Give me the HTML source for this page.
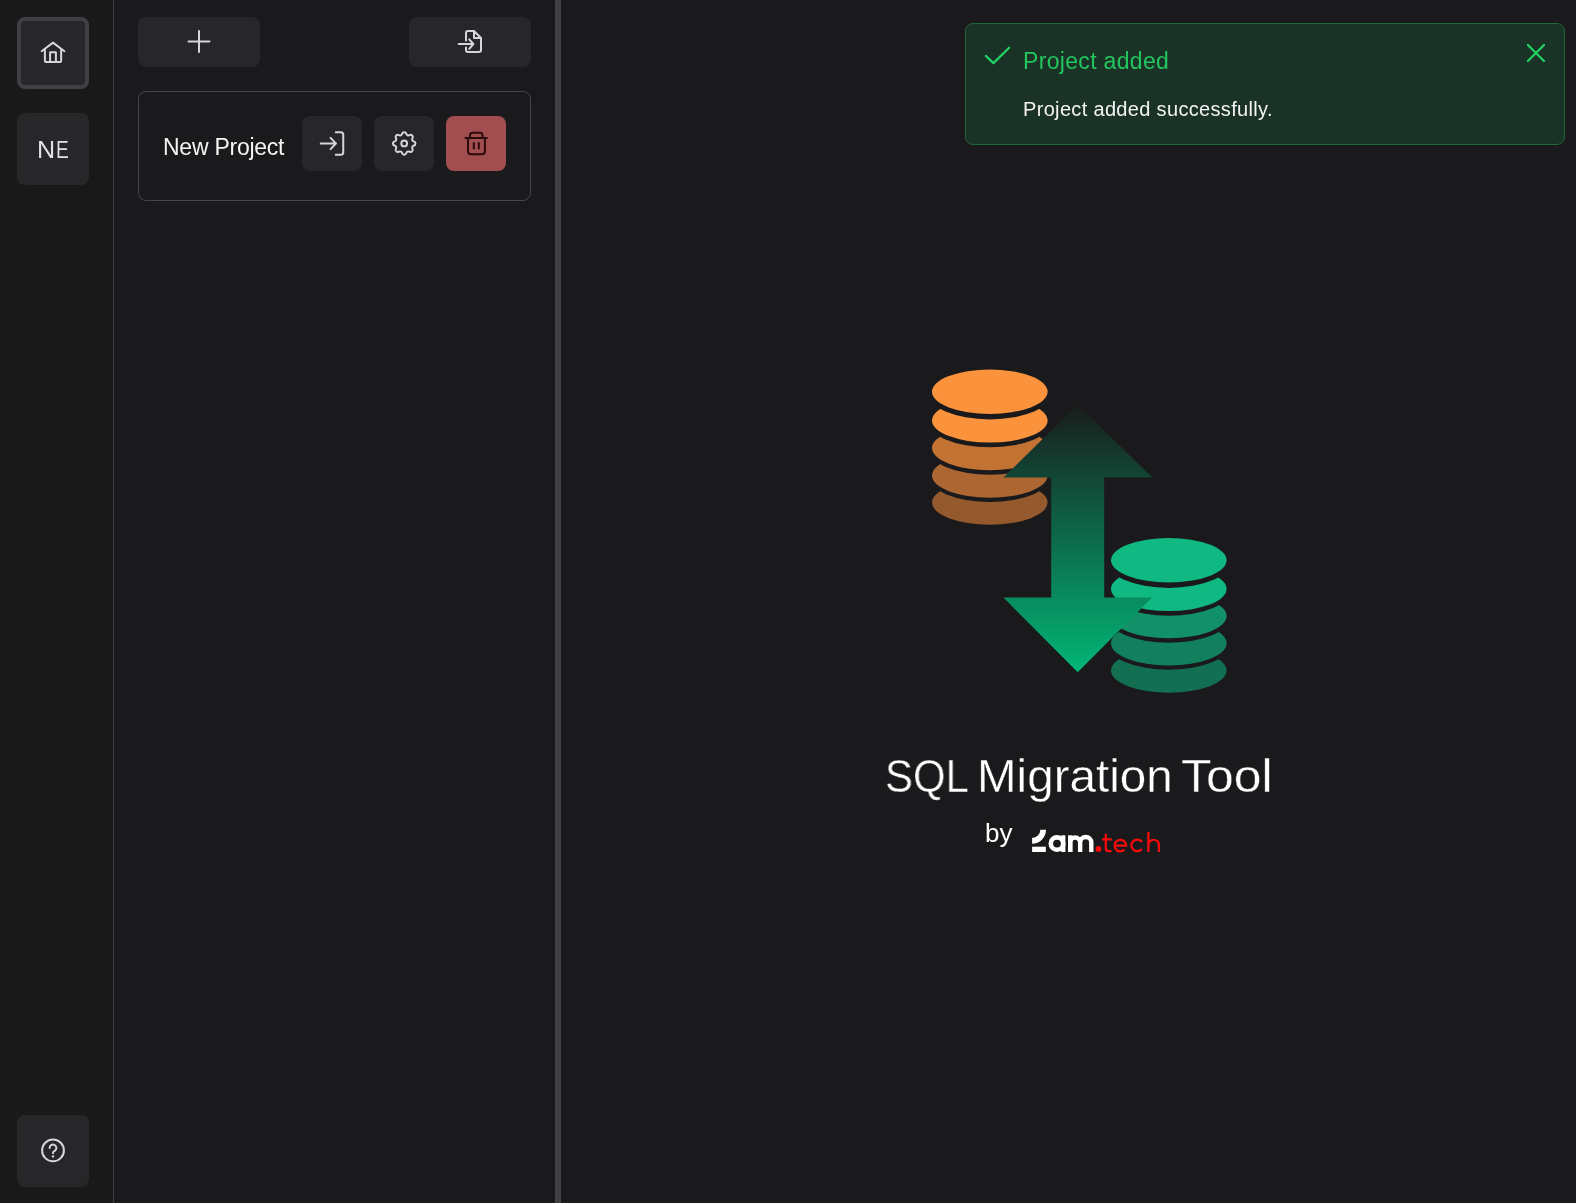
<!DOCTYPE html>
<html>
<head>
<meta charset="utf-8">
<style>
html,body{margin:0;padding:0;width:1576px;height:1203px;overflow:hidden;background:#1a1a1d;font-family:"Liberation Sans",sans-serif;}
.abs{position:absolute;}
#side{left:0;top:0;width:113px;height:1203px;background:#191919;}
#sideline{left:113px;top:0;width:1px;height:1203px;background:#3f3f46;}
#panel{left:114px;top:0;width:441px;height:1203px;background:#1a1a1d;}
#divider{left:555px;top:0;width:6px;height:1203px;background:#3f3f46;}
.btn{position:absolute;background:#27272a;border-radius:8px;}
#home{left:17px;top:17px;width:64px;height:64px;border:4px solid #3f3f46;border-radius:8px;}
.txt{position:absolute;white-space:nowrap;line-height:1;will-change:transform;}
#card{left:138px;top:91px;width:391px;height:108px;border:1px solid #45454c;border-radius:8px;}
#toast{left:965px;top:23px;width:598px;height:120px;border:1px solid #21663a;background:#1b3226;border-radius:8px;}
svg.full{position:absolute;left:0;top:0;width:1576px;height:1203px;}
</style>
</head>
<body>
<div class="abs" id="side"></div>
<div class="abs" id="sideline"></div>
<div class="abs" id="panel"></div>
<div class="abs" id="divider"></div>

<div class="btn" id="home"></div>
<div class="btn" style="left:17px;top:113px;width:72px;height:72px;"></div>
<div class="btn" style="left:17px;top:1115px;width:72px;height:72px;"></div>

<div class="btn" style="left:138px;top:17px;width:122px;height:50px;"></div>
<div class="btn" style="left:409px;top:17px;width:122px;height:50px;"></div>

<div class="abs" id="card"></div>
<div class="btn" style="left:302px;top:116px;width:60px;height:55px;"></div>
<div class="btn" style="left:374px;top:116px;width:60px;height:55px;"></div>
<div class="btn" style="left:446px;top:116px;width:60px;height:55px;background:#a24d4f;"></div>

<div class="abs" id="toast"></div>

<div class="txt" style="left:37px;top:138px;font-size:24px;color:#e2e2e5;transform-origin:0 0;transform:scaleX(1.045);">N</div>
<div class="txt" style="left:56px;top:138px;font-size:24px;color:#e2e2e5;transform-origin:0 0;transform:scaleX(0.80);">E</div>
<div class="txt" style="left:163px;top:135.5px;font-size:23px;letter-spacing:-0.25px;color:#f4f4f5;">New Project</div>
<div class="txt" style="left:1023px;top:50px;font-size:23px;letter-spacing:0.33px;color:#22c55e;">Project added</div>
<div class="txt" style="left:1023px;top:99px;font-size:20px;letter-spacing:0.33px;color:#f4f4f5;">Project added successfully.</div>
<div class="txt" id="w1" style="-webkit-text-stroke:0.4px #1a1a1d;left:885px;top:753px;font-size:46px;color:#ffffff;transform-origin:0 0;transform:scaleX(0.91);">SQL</div>
<div class="txt" id="w2" style="-webkit-text-stroke:0.4px #1a1a1d;left:976.5px;top:753px;font-size:46px;color:#ffffff;transform-origin:0 0;transform:scaleX(1.034);">Migration</div>
<div class="txt" id="w3" style="-webkit-text-stroke:0.4px #1a1a1d;left:1181px;top:753px;font-size:46px;color:#ffffff;transform-origin:0 0;transform:scaleX(1.085);">Tool</div>
<div class="txt" style="left:985px;top:820px;font-size:26px;color:#ffffff;">by</div>

<svg class="full" viewBox="0 0 1576 1203">
<defs>
<linearGradient id="ag" gradientUnits="userSpaceOnUse" x1="0" y1="404.6" x2="0" y2="672.3">
<stop offset="0" stop-color="#191c1c"/>
<stop offset="0.5" stop-color="#0c6a4a"/>
<stop offset="1" stop-color="#02b677"/>
</linearGradient>
</defs>
<g id="logo">
<ellipse cx="989.8" cy="502.60" rx="57.8" ry="22.2" fill="#94592d"/>
<ellipse cx="989.8" cy="475.50" rx="62.00" ry="26.40" fill="#1a1a1d"/>
<ellipse cx="989.8" cy="475.50" rx="57.8" ry="22.2" fill="#ab6631"/>
<ellipse cx="989.8" cy="448.10" rx="62.25" ry="26.65" fill="#1a1a1d"/>
<ellipse cx="989.8" cy="448.10" rx="57.8" ry="22.2" fill="#c27334"/>
<ellipse cx="989.8" cy="420.40" rx="62.55" ry="26.95" fill="#1a1a1d"/>
<ellipse cx="989.8" cy="420.40" rx="57.8" ry="22.2" fill="#fb923c"/>
<ellipse cx="989.8" cy="391.70" rx="63.30" ry="27.70" fill="#1a1a1d"/>
<ellipse cx="989.8" cy="391.70" rx="57.8" ry="22.2" fill="#fb923c"/>
<ellipse cx="1168.8" cy="670.50" rx="57.8" ry="22.2" fill="#136f51"/>
<ellipse cx="1168.8" cy="643.30" rx="62.00" ry="26.40" fill="#1a1a1d"/>
<ellipse cx="1168.8" cy="643.30" rx="57.8" ry="22.2" fill="#13805d"/>
<ellipse cx="1168.8" cy="616.10" rx="62.25" ry="26.65" fill="#1a1a1d"/>
<ellipse cx="1168.8" cy="616.10" rx="57.8" ry="22.2" fill="#129068"/>
<ellipse cx="1168.8" cy="588.90" rx="62.55" ry="26.95" fill="#1a1a1d"/>
<ellipse cx="1168.8" cy="588.90" rx="57.8" ry="22.2" fill="#10b981"/>
<ellipse cx="1168.8" cy="560.20" rx="63.30" ry="27.70" fill="#1a1a1d"/>
<ellipse cx="1168.8" cy="560.20" rx="57.8" ry="22.2" fill="#10b981"/>
<path d="M1077.7 404.6 L1152.2 477.5 H1104.2 V597.6 H1152.2 L1077.7 672.3 L1003.4 597.6 H1051.2 V477.5 H1003.4 Z" fill="url(#ag)"/>
</g>
<g id="brand" fill="#ffffff">
<path d="M1040.3 829.8 H1046 A13.9 13.9 0 0 1 1032.1 843.7 V838 A8.2 8.2 0 0 0 1040.3 829.8 Z"/>
<rect x="1032.1" y="846.7" width="13.7" height="5.3"/>
<circle cx="1057" cy="843.6" r="6.2" fill="none" stroke="#fff" stroke-width="4.6"/>
<rect x="1061.2" y="835.3" width="4.2" height="16.7"/>
<path d="M1070.2 852 V842.5 A4.97 4.97 0 0 1 1080.15 842.5 V852 M1080.15 842.5 A5.575 5.575 0 0 1 1091.3 842.5 V852" fill="none" stroke="#fff" stroke-width="4.4"/>
<rect x="1068" y="835.3" width="4.4" height="16.7"/>
</g>
<g id="tech" fill="none" stroke="#ff0a0a" stroke-width="2.2">
<circle cx="1098.4" cy="848.9" r="2.9" fill="#ff0a0a" stroke="none"/>
<path d="M1105.8 833.7 V848.3 Q1105.8 851.2 1108.7 851.2 H1111.5 M1102 839.4 H1111.8"/>
<path d="M1114.6 845.6 H1126.2 A5.8 5.8 0 1 0 1124.6 849.6"/>
<path d="M1141.9 842 A5.8 5.8 0 1 0 1141.9 848.8"/>
<path d="M1148.4 831.9 V852 M1148.4 845 A5.25 5.25 0 0 1 1158.9 845 V852"/>
</g>
<g id="icons" fill="none" stroke="#d6d6da" stroke-width="2" stroke-linecap="round" stroke-linejoin="round">
<path d="M41.65 51.25 L52.96 42.6 L64.4 51.25 M44.9 49 V61 a1 1 0 0 0 1 1 H60.15 a1 1 0 0 0 1 -1 V49 M50.1 62 V52.5 a0.3 0.3 0 0 1 0.3 -0.3 H55.6 a0.3 0.3 0 0 1 0.3 0.3 V62"/>
<circle cx="53" cy="1150.4" r="10.9"/>
<path d="M49.6 1148 A3.4 3.4 0 1 1 55.4 1150.4 L53.7 1151.5 Q53 1152 53 1152.8 V1153.2"/>
<circle cx="53" cy="1156.4" r="1.2" fill="#d6d6da" stroke="none"/>
<path d="M188.5 41.5 H209.5 M199 31 V52"/>
<path d="M466 40.6 V33 a2 2 0 0 1 2 -2 H474 L481 38 V50 a2 2 0 0 1 -2 2 H468 a2 2 0 0 1 -2 -2 V47.6 M474 31 V38 H481 M458.7 44 H473.4 M469.2 39.3 L473.4 44 L469.2 48.8"/>
<g transform="translate(317,128.5) scale(1.25)" stroke-width="1.6">
<path d="M15 3h4a2 2 0 0 1 2 2v14a2 2 0 0 1-2 2h-4"/><polyline points="10.9 16.5 15 12 10.9 7.5"/><line x1="15" x2="3" y1="12" y2="12"/>
</g>
<g transform="translate(389.2,128.45) scale(1.25)" stroke-width="1.6">
<path d="M10.325 4.317c.426 -1.756 2.924 -1.756 3.35 0a1.724 1.724 0 0 0 2.573 1.066c1.543 -.94 3.31 .826 2.37 2.37a1.724 1.724 0 0 0 1.065 2.572c1.756 .426 1.756 2.924 0 3.35a1.724 1.724 0 0 0 -1.066 2.573c.94 1.543 -.826 3.31 -2.37 2.37a1.724 1.724 0 0 0 -2.572 1.065c-.426 1.756 -2.924 1.756 -3.35 0a1.724 1.724 0 0 0 -2.573 -1.066c-1.543 .94 -3.310 -.826 -2.37 -2.37a1.724 1.724 0 0 0 -1.065 -2.572c-1.756 -.426 -1.756 -2.924 0 -3.35a1.724 1.724 0 0 0 1.066 -2.573c-.94 -1.543 .826 -3.31 2.37 -2.37c1 .608 2.296 .07 2.572 -1.065z"/><circle cx="12" cy="12" r="2.3"/>
</g>
<path stroke="#2a0b0c" d="M465.5 138 H486.9 M468 138 V151.3 a3 3 0 0 0 3 3 H481.9 a3 3 0 0 0 3 -3 V138 M470 138 V135.2 a2.5 2.5 0 0 1 2.5 -2.5 H480 a2.5 2.5 0 0 1 2.5 2.5 V138 M473.8 142.9 V148.6 M478.8 142.9 V148.6"/>
<path stroke="#22d366" stroke-width="2.2" d="M985.9 55.9 L993.4 63.1 L1009.1 47.7"/>
<path stroke="#22d366" stroke-width="2.2" d="M1527.9 45 L1544 61 M1544 45 L1527.9 61"/>
</g>
</svg>
</body>
</html>
